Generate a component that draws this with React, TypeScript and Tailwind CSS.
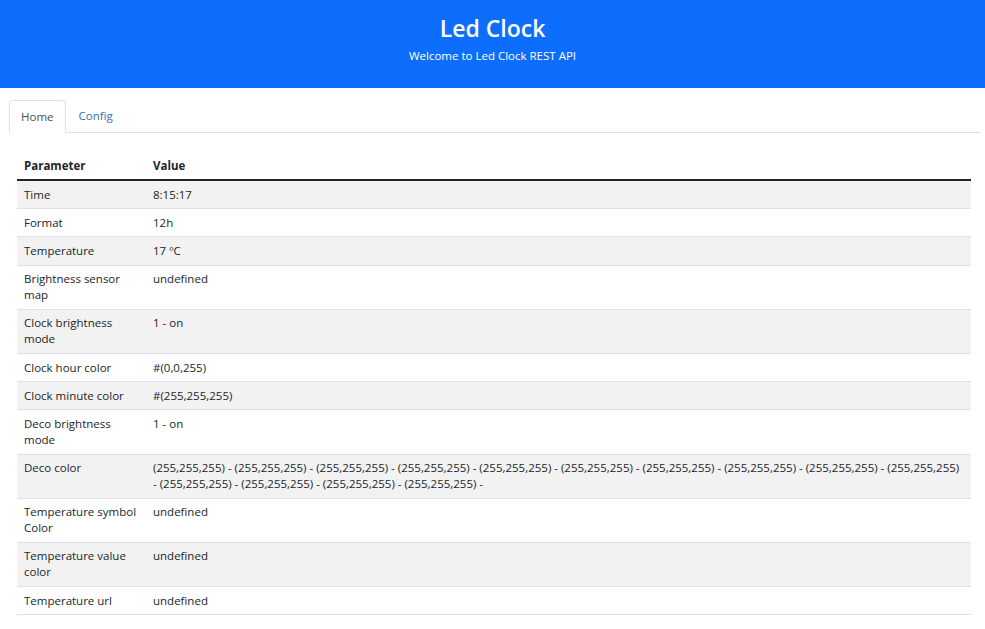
import React from 'react';

type Row = { name: string[]; value: string[] };

const deco1 = Array(10).fill('(255,255,255)').join(' - ');
const deco2 = '- ' + Array(4).fill('(255,255,255)').join(' - ') + ' -';

const rows: Row[] = [
  { name: ['Time'], value: ['8:15:17'] },
  { name: ['Format'], value: ['12h'] },
  { name: ['Temperature'], value: ['17 ºC'] },
  { name: ['Brightness sensor', 'map'], value: ['undefined'] },
  { name: ['Clock brightness', 'mode'], value: ['1 - on'] },
  { name: ['Clock hour color'], value: ['#(0,0,255)'] },
  { name: ['Clock minute color'], value: ['#(255,255,255)'] },
  { name: ['Deco brightness', 'mode'], value: ['1 - on'] },
  { name: ['Deco color'], value: [deco1, deco2] },
  { name: ['Temperature symbol', 'Color'], value: ['undefined'] },
  { name: ['Temperature value', 'color'], value: ['undefined'] },
  { name: ['Temperature url'], value: ['undefined'] },
];

function Lines({ lines }: { lines: string[] }) {
  return (
    <>
      {lines.map((l, i) => (
        <span key={i} className="block whitespace-nowrap">
          {l}
        </span>
      ))}
    </>
  );
}

export default function App() {
  return (
    <div className="min-h-screen bg-white text-[#212529] font-['Open_Sans','Noto_Sans',sans-serif]">
      {/* HEADER */}
      <header className="h-[88px] bg-[#0d6efd] text-white text-center pt-[11px]">
        <h1 className="text-[23px] leading-[34px] font-semibold">Led Clock</h1>
        <p className="text-[11.5px] leading-[16px] mt-[3px]">Welcome to Led Clock REST API</p>
      </header>

      <div className="pl-[9px] pr-[5px] pt-[12px]">
        {/* TABS */}
        <nav className="flex border-b border-[#dee2e6] text-[11.5px] leading-[16px]">
          <a className="-mb-px px-[11px] pt-[8px] pb-[7px] border border-[#dee2e6] border-b-white bg-white rounded-t-[4px] text-[#495057]">
            Home
          </a>
          <a className="px-[13px] pt-[8px] pb-[7px] text-[#3470b8]">Config</a>
        </nav>

        {/* TABLE */}
        <div className="pl-[8px] pr-[9px] pt-[19px]">
          <table className="w-full table-fixed border-collapse text-[11.5px] leading-[16px]">
            <colgroup>
              <col className="w-[136px]" />
              <col />
            </colgroup>
            <thead>
              <tr className="border-b-[2px] border-[#212529]">
                <th className="text-left font-bold px-[7px] py-[5.5px]">Parameter</th>
                <th className="text-left font-bold py-[5.5px]">Value</th>
              </tr>
            </thead>
            <tbody>
              {rows.map((r, i) => (
                <tr key={i} className={`border-b border-[#dee2e6] ${i % 2 === 0 ? 'bg-[#f2f2f2]' : 'bg-white'}`}>
                  <td className="align-top px-[7px] py-[5.6px]">
                    <Lines lines={r.name} />
                  </td>
                  <td className="align-top py-[5.6px]">
                    <Lines lines={r.value} />
                  </td>
                </tr>
              ))}
            </tbody>
          </table>
        </div>
      </div>
    </div>
  );
}
